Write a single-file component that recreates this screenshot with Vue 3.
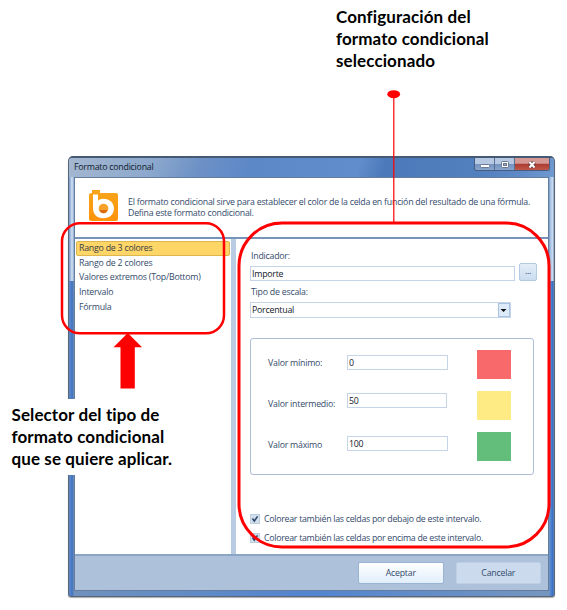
<script setup>
import { ref } from 'vue'

const formats = ['Rango de 3 colores', 'Rango de 2 colores', 'Valores extremos (Top/Bottom)', 'Intervalo', 'Fórmula']
const selected = ref(0)
const indicator = ref('Importe')
const values = ref([
  { label: 'Valor mínimo:', value: '0', tone: 'red' },
  { label: 'Valor intermedio:', value: '50', tone: 'yellow' },
  { label: 'Valor máximo', value: '100', tone: 'green' },
])
const options = [
  'Colorear también las celdas por debajo de este intervalo.',
  'Colorear también las celdas por encima de este intervalo.',
]
</script>

<template>
  <main class="stage">
    <section class="dialog">
      <header class="titlebar">
        <span class="title">Formato condicional</span>
        <div class="controls">
          <span class="ctl"><svg width="20" height="13"><rect x="5.5" y="6.5" width="9" height="3" rx="1" fill="#fff" stroke="#6b7a92" /></svg></span>
          <span class="ctl"><svg width="20" height="13"><rect x="6.5" y="3.5" width="7" height="6" rx="1" fill="#fff" stroke="#6b7a92" /><rect x="8.5" y="5.5" width="3" height="2" fill="#91a7c8" stroke="#6b7a92" /></svg></span>
          <span class="ctl close"><svg width="34" height="13"><path d="M14.5 4l5 5.5M19.5 4l-5 5.5" stroke="#643c42" stroke-width="3.4" /><path d="M14.5 4l5 5.5M19.5 4l-5 5.5" stroke="#fff" stroke-width="2" /></svg></span>
        </div>
      </header>
      <div class="client">
        <div class="intro">
          <svg class="logo" width="30" height="34" viewBox="0 0 30 34">
            <defs><linearGradient id="orange" x2="0" y2="1"><stop stop-color="#f7a51c" /><stop offset="1" stop-color="#ff9208" /></linearGradient></defs>
            <path d="M3 0h8v3h16q2 0 2 2v24q0 2-2 2H2q-2 0-2-2V5q0-2 3-2z" fill="url(#orange)" />
            <path d="M4 4.500h5v6q2-1.800 5.300-1.800c6.500 0 10.700 4.300 10.700 9.800s-4.200 9.800-10.700 9.800S4 24 4 18.500z" fill="#fff" />
            <circle cx="14.500" cy="18.500" r="4.800" fill="#f7a229" />
            <path d="M10.500 20h8q-1.400 3.200-4 3.200T10.500 20" fill="#dc6a12" />
            <path d="M1 33h27" stroke="#fff0d5" stroke-width="2" />
          </svg>
          <p>El formato condicional sirve para establecer el color de la celda en función del resultado de una fórmula.<br>Defina este formato condicional.</p>
        </div>
        <div class="body">
          <ul class="formats">
            <li v-for="(f, i) in formats" :key="f" :class="{ active: i === selected }" @click="selected = i">{{ f }}</li>
          </ul>
          <div class="settings">
            <label class="caption">Indicador:</label>
            <div class="picker">
              <input v-model="indicator" class="field">
              <button class="browse">...</button>
            </div>
            <label class="caption scale">Tipo de escala:</label>
            <div class="select"><span>Porcentual</span><i><svg width="9" height="12"><path d="M1.500 5h6L4.500 8z" fill="#111" /></svg></i></div>
            <div class="group">
              <div v-for="v in values" :key="v.label" class="value-row" :class="v.tone">
                <label>{{ v.label }}</label>
                <input v-model="v.value" class="field">
                <span class="swatch"></span>
              </div>
            </div>
            <div class="options">
              <label v-for="o in options" :key="o">
                <svg width="10" height="10"><rect x=".5" y=".5" width="9" height="9" fill="#d2deeb" stroke="#bdcede" /><path d="M2.500 4.500L4.300 7.200 7.500 2.300" fill="none" stroke="#294264" stroke-width="1.500" /></svg>
                <span>{{ o }}</span>
              </label>
            </div>
          </div>
        </div>
        <footer>
          <button class="accept">Aceptar</button>
          <button class="cancel">Cancelar</button>
        </footer>
      </div>
    </section>

    <svg class="marks" width="567" height="610" fill="none" stroke="#f00">
      <rect x="62" y="223.300" width="162" height="110" rx="18" stroke-width="2.500" />
      <rect x="239" y="223" width="310" height="324" rx="43" stroke-width="3" />
      <path d="M393.800 94V223" stroke-width="1.200" />
      <ellipse cx="393.700" cy="94.200" rx="6.400" ry="4" fill="#f00" stroke="none" />
      <path d="M127.800 333L142 347.300h-7.200V388.500h-14.300V347.300H113.500z" fill="#f00" stroke="none" />
    </svg>
    <p class="note config">Configuración del<br>formato condicional<br>seleccionado</p>
    <p class="note selector">Selector del tipo de<br>formato condicional<br>que se quiere aplicar.</p>
  </main>
</template>

<style>
body { margin: 0; background: #fff; }
</style>

<style scoped>
* { box-sizing: border-box; }
.stage { position: relative; width: 567px; height: 610px; padding: 156px 0 0 68px; overflow: hidden; background: #fff; font-family: "Open Sans", sans-serif; font-size: 8.8px; letter-spacing: -.235px; color: #344b6c; }
p, ul { margin: 0; padding: 0; }
input, button { font: inherit; letter-spacing: inherit; color: inherit; margin: 0; }
.dialog { width: 487px; height: 441px; padding: 0 5px 5px; display: flex; flex-direction: column; border: 1px solid #59677b; border-top: 2px solid #465973; border-radius: 5px 5px 3px 3px; background: linear-gradient(90deg, #7496c4 0, #d3e2f5 3px, #8ba8cf 5px, transparent 5px, transparent 480px, #a0bbdf 481px, #d2e1f4 484px, #607da8 485px) 0 0 / 100% 123px no-repeat, linear-gradient(90deg, #6385b9 0, #4f83d0 2px, #3e6fbc 3px, #7091bc 5px, #5284d0 50%, #7596bf 480px, #4d84d4 482px, #356bbc 484px, #7293be 485px); box-shadow: 0 1px 1px #aaa; }
.titlebar { flex: 0 0 19px; margin: 0 -5px; padding: 0 4px 0 5px; display: flex; justify-content: space-between; border-radius: 3px 3px 0 0; background: linear-gradient(110deg, #a4b7d0 0, #8ca8cd 80px, #6d91c6 125px, #5c88c8 175px, #618dcc 275px, #4c79b9 300px, #527fbd 390px, #5f8ac8 430px, #719ace 100%); }
.title { padding-top: 3px; line-height: 13px; color: #101b2c; }
.controls { display: flex; height: 13px; border: 1px solid #465e83; border-top: 0; border-radius: 0 0 3px 3px; overflow: hidden; }
.ctl { display: block; width: 20px; height: 13px; background: linear-gradient(#b7c9e2 45%, #7593bf 50%, #8da9d0); border-right: 1px solid #546f98; }
.ctl.close { width: 34px; border: 0; background: linear-gradient(#d59893 40%, #ad3d33 50%, #c35b4c); }
.ctl svg { display: block; }
.client { flex: 1; min-height: 0; border: 1px solid #647d9f; background: #fff; display: flex; flex-direction: column; }
.intro { flex: 0 0 61px; display: flex; padding: 12px 0 0 14px; border-bottom: 2px solid #7793b7; }
.intro p { padding-top: 7px; margin-left: 9px; line-height: 11.200px; white-space: nowrap; }
.logo { flex: none; }
.body { flex: 0 0 315px; display: flex; }
.formats { width: 156px; padding: 2px 1px; list-style: none; }
.formats li { height: 14.700px; line-height: 13px; padding-left: 2px; border: 1px solid transparent; border-radius: 2px; }
.formats .active { background: #fed667; border-color: #dfb64d; color: #393d45; }
.settings { flex: 1; min-width: 0; border-left: 5px solid #b9cce4; padding: 11px 10px 0 14px; display: flex; flex-direction: column; }
.caption { height: 12px; line-height: 12px; padding-left: 1px; }
.picker { display: flex; gap: 4px; align-items: flex-end; height: 20px; margin-top: -1px; }
.field, .select { border: 1px solid #c5d4e7; background: #fff; color: #14181f; outline: none; }
.picker .field { width: 265px; height: 15px; padding: 0 1px; }
.browse { width: 18px; height: 18px; margin-bottom: 0; padding: 0 0 3px; border: 1px solid #b4c9e3; border-radius: 2px; background: linear-gradient(#e3edf8, #cbdcf0); line-height: 12px; }
.scale { margin-top: 5px; }
.select { width: 261px; height: 16px; display: flex; justify-content: space-between; margin-top: 4px; padding-left: 1px; line-height: 14px; }
.select i { width: 12px; height: 14px; border: 1px solid #abc2dd; background: #dceafa; }
.select svg { display: block; }
.group { width: 284px; height: 137px; margin-top: 20px; padding: 11px 21px 0 17px; border: 1px solid #aebed5; border-radius: 3px; }
.value-row { display: grid; grid-template-columns: 79px 101px 34px; height: 41px; align-items: start; }
.value-row label { padding-top: 7px; line-height: 12px; white-space: nowrap; }
.value-row .field { width: 101px; height: 15px; margin-top: 5px; padding: 0 1px; }
.yellow .field { width: 100px; margin-top: 2px; }
.green .field { margin-top: 4px; }
.swatch { width: 34px; height: 29px; margin-left: 29px; background: #f8696b; }
.yellow .swatch { background: #ffeb84; }
.green .swatch { background: #63be7b; }
.options { margin-top: 34px; }
.options label { display: flex; align-items: center; gap: 4px; height: 19.500px; white-space: nowrap; letter-spacing: -.28px; }
footer { flex: 1; display: flex; gap: 12px; padding: 6px 7px 0 283px; border-top: 2px solid #8ba5c5; background: #adc1db; }
footer button { width: 86px; height: 22px; border: 1px solid #9ab5d4; border-radius: 2px; padding: 0; background: linear-gradient(#fff, #e1eefb); }
footer .cancel { background: #cbdbed; border-color: #bdd0e6; }
.marks { position: absolute; left: 0; top: 0; }
.note { position: absolute; background: #fff; font: bold 17px/22px Lato, sans-serif; letter-spacing: .1px; font-variant-ligatures: none; color: #000; white-space: nowrap; }
.config { left: 336px; top: 6px; }
.selector { left: 0; top: 399px; width: 190px; height: 76px; padding: 5px 0 0 11.500px; }
</style>
